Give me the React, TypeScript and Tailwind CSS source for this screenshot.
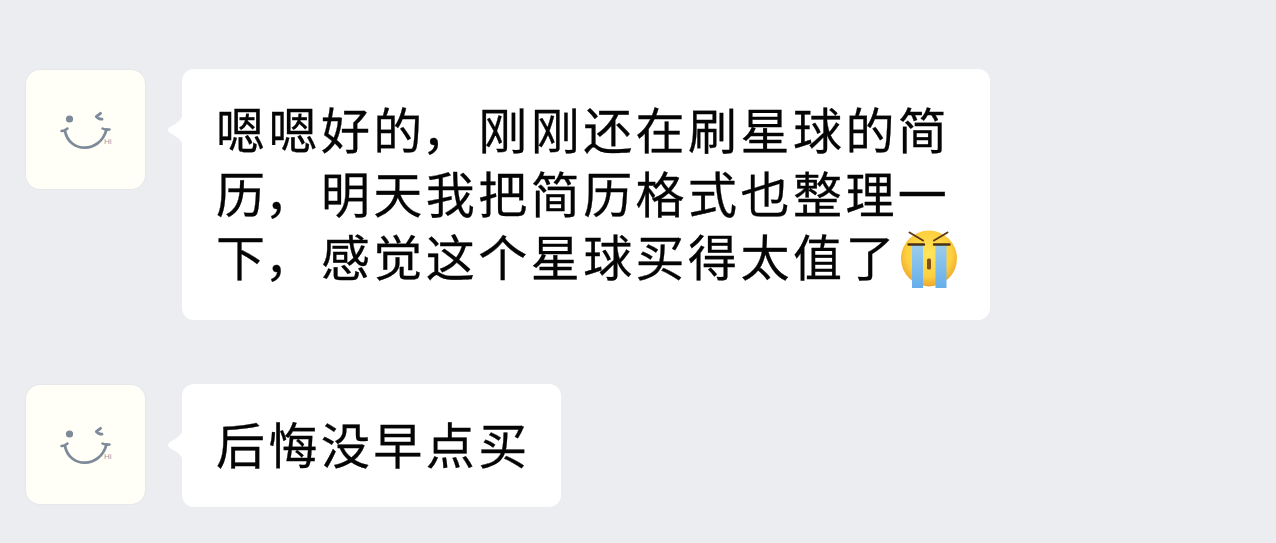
import { Fragment, ReactNode } from "react";

const firstMessage = [
    "嗯嗯好的，刚刚还在刷星球的简",
    "历，明天我把简历格式也整理一",
    "下，感觉这个星球买得太值了",
];

function Avatar() {
    return (
        <div className="mt-px size-[119px] shrink-0 rounded-[14px] bg-[#fffef7] shadow-[0_0_2px_rgba(0,0,0,0.08)]">
            <svg viewBox="0 0 119 119" className="size-full tracking-normal" fill="none" stroke="#7d8a99" strokeLinecap="round">
                <circle cx="43.5" cy="49" r="3.6" fill="#7d8a99" stroke="none"/>
                <path d="M74.5 43.3L70.3 46.6Q72.5 49.3 76 49.2" strokeWidth="2.8" strokeLinejoin="round"/>
                <path d="M39 61C43 83 74 84 80.5 59.5" strokeWidth="2.8"/>
                <path d="M35.5 61Q38.5 61 41.5 58.5M76.5 58.5Q79.5 60 83.5 59.5" strokeWidth="2.5"/>
                <text x="78" y="74" fontSize="8" fontFamily="Liberation Sans, sans-serif"
                      fill="#9ba3aa" stroke="none">Hi</text>
            </svg>
        </div>
    );
}

function CryingFace() {
    return (
        <svg viewBox="0 0 58 60" className="ml-0.5 h-[60px] w-[58px] shrink-0">
            <defs>
                <radialGradient id="face" cx="50%" cy="42%" r="58%">
                    <stop offset="0" stopColor="#ffe65c"/>
                    <stop offset="0.7" stopColor="#fdcf3e"/>
                    <stop offset="1" stopColor="#eda62d"/>
                </radialGradient>
                <linearGradient id="tear" x1="0" y1="0" x2="0" y2="1">
                    <stop offset="0" stopColor="#9bcdeb"/>
                    <stop offset="1" stopColor="#65aeea"/>
                </linearGradient>
            </defs>
            <circle cx="29" cy="29.5" r="28" fill="url(#face)"/>
            <path d="M12 16h11v43H12zM35.5 16h11v43h-11z" fill="url(#tear)"/>
            <path d="M8.5 15.5H24M34 15.5H49.5" stroke="#473016" strokeWidth="2.4" strokeLinecap="round"/>
            <path d="M9.5 3.5L23 11.5M47.5 3.5L34 11.5" stroke="#5c3a19" strokeWidth="2" strokeLinecap="round"/>
            <rect x="27" y="29.5" width="4" height="11" rx="1.5" fill="#80501b"/>
        </svg>
    );
}

// the comma hangs a little closer to the character before it
function Line({ text }: { text: string }) {
    return (
        <span>
            {text.split("，").map((part, index) => (
                <Fragment key={part}>
                    {index > 0 && <span className="-ml-1 mr-1">，</span>}
                    {part}
                </Fragment>
            ))}
        </span>
    );
}

function Message({ children }: { children: ReactNode }) {
    return (
        <div className="flex items-start gap-[37px]">
            <Avatar />
            <div className="relative rounded-[12px] bg-white px-[34px] pt-[27px] pb-[33px]">
                <svg viewBox="0 0 16 32" className="absolute top-[45px] -left-[15px] h-8 w-4" fill="white">
                    <path d="M16 0C15 6 10 9 3 13Q-1 16 3 19C10 23 15 26 16 32Z"/>
                </svg>
                {children}
            </div>
        </div>
    );
}

export default function App() {
    return (
        <main className="flex h-[543px] w-[1276px] flex-col gap-16 overflow-hidden bg-[#ebedf1] pt-[69px] pl-[26px] font-['Noto_Sans_CJK_SC',sans-serif] text-[49px] leading-[63.5px] tracking-[3.45px] whitespace-nowrap text-[#050505] [-webkit-text-stroke:0.3px_#050505]">
            <Message>
                <div className="w-[740px]">
                    {firstMessage.map((line, index) => (
                        <div key={line} className="flex h-[63.5px] items-center">
                            <Line text={line} />
                            {index === firstMessage.length - 1 &&
                             <div className="pt-2"><CryingFace /></div>}
                        </div>
                    ))}
                </div>
            </Message>
            <Message>
                <p className="w-[311px]"><Line text="后悔没早点买" /></p>
            </Message>
        </main>
    );
}
